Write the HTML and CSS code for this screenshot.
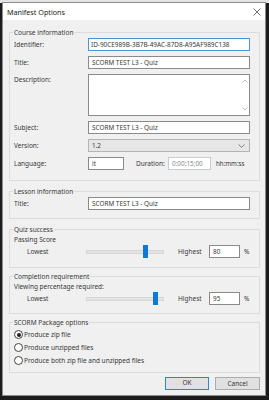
FILE: index.html
```html
<!DOCTYPE html>
<html>
<head>
<meta charset="utf-8">
<link rel="stylesheet" href="styles.css">
</head>
<body>
<div class="screen">
  <div class="window">
    <div class="titlebar">
      <span class="title">Manifest Options</span>
      <svg class="close" width="8" height="8" viewBox="0 0 8 8"><path d="M0.5 0.5 L7.5 7.5 M7.5 0.5 L0.5 7.5" stroke="#333" stroke-width="0.7" fill="none"/></svg>
    </div>
    <div class="body">
      <div class="group g-course">
        <div class="legend">Course information</div>
        <div class="rows">
          <div class="row"><span class="lbl">Identifier:</span><div class="field focus">ID-90CE989B-3B7B-49AC-87D8-A95AF989C138</div></div>
          <div class="row"><span class="lbl">Title:</span><div class="field">SCORM TEST L3 - Quiz</div></div>
          <div class="row row-desc"><span class="lbl">Description:</span>
            <div class="field area">
              <div class="scroll">
                <svg width="6" height="4" viewBox="0 0 6 4"><path d="M0.5 3.5 L3 1 L5.5 3.5" stroke="#b0b0b0" stroke-width="0.8" fill="none"/></svg>
                <svg width="6" height="4" viewBox="0 0 6 4"><path d="M0.5 0.5 L3 3 L5.5 0.5" stroke="#b0b0b0" stroke-width="0.8" fill="none"/></svg>
              </div>
            </div>
          </div>
          <div class="row"><span class="lbl">Subject:</span><div class="field">SCORM TEST L3 - Quiz</div></div>
          <div class="row"><span class="lbl">Version:</span>
            <div class="field select"><span>1.2</span>
              <svg width="7" height="4" viewBox="0 0 7 4"><path d="M0.5 0.5 L3.5 3.3 L6.5 0.5" stroke="#666" stroke-width="0.8" fill="none"/></svg>
            </div>
          </div>
          <div class="row"><span class="lbl">Language:</span><div class="field lang">it</div>
            <span class="dur-lbl">Duration:</span><div class="field dur">0:00:15;00</div><span class="hms">hh:mm:ss</span>
          </div>
        </div>
      </div>

      <div class="group g-lesson">
        <div class="legend">Lesson information</div>
        <div class="rows">
          <div class="row"><span class="lbl">Title:</span><div class="field">SCORM TEST L3 - Quiz</div></div>
        </div>
      </div>

      <div class="group g-quiz">
        <div class="legend">Quiz success</div>
        <div class="sub">Passing Score</div>
        <div class="slider-row">
          <span class="low">Lowest</span>
          <div class="track"><div class="thumb" style="left: 56px"></div></div>
          <span class="high">Highest</span>
          <div class="field pct">80</div>
          <span class="pc">%</span>
        </div>
      </div>

      <div class="group g-comp">
        <div class="legend">Completion requirement</div>
        <div class="sub">Viewing percentage required:</div>
        <div class="slider-row">
          <span class="low">Lowest</span>
          <div class="track"><div class="thumb" style="left: 66px"></div></div>
          <span class="high">Highest</span>
          <div class="field pct">95</div>
          <span class="pc">%</span>
        </div>
      </div>

      <div class="group g-scorm">
        <div class="legend">SCORM Package options</div>
        <div class="radios">
          <div class="radio"><span class="dot on"></span>Produce zip file</div>
          <div class="radio"><span class="dot"></span>Produce unzipped files</div>
          <div class="radio"><span class="dot"></span>Produce both zip file and unzipped files</div>
        </div>
      </div>

      <div class="buttons">
        <div class="btn default">OK</div>
        <div class="btn">Cancel</div>
      </div>
    </div>
  </div>
</div>
</body>
</html>
```

FILE: styles.css
```css
html, body {
  margin: 0;
  padding: 0;
}
body {
  width: 269px;
  height: 400px;
  overflow: hidden;
  background: #1c1c1c;
  font-family: "Noto Sans", "DejaVu Sans", sans-serif;
  font-size: 6.5px;
  color: #383838;
}
.screen {
  width: 269px;
  height: 400px;
  background: linear-gradient(#e4e4e4 0, #e4e4e4 3px, #1c1c1c 3px);
  padding: 2px 0 0 2px;
  box-sizing: border-box;
}
.window {
  width: 264px;
  height: 394px;
  border: 1px solid #8c8c8c;
  box-sizing: border-box;
  background: #f0f0f0;
  display: flex;
  flex-direction: column;
}
.titlebar {
  height: 17px;
  background: #ffffff;
  display: flex;
  align-items: center;
  justify-content: space-between;
  padding: 0 4px 0 4px;
  flex: none;
}
.title {
  font-size: 7.2px;
  color: #222;
}
.body {
  padding: 0 5px 0 6px;
  display: flex;
  flex-direction: column;
}
.group {
  border: 1px solid #dcdcdc;
  display: flex;
  flex-direction: column;
  box-sizing: border-box;
}
.legend {
  margin-top: -5px;
  margin-left: 3px;
  padding: 0 1px;
  height: 9px;
  line-height: 9px;
  background: #f0f0f0;
  align-self: flex-start;
  white-space: nowrap;
}
.g-course { margin-top: 12px; height: 149px; }
.g-lesson { margin-top: 10px; height: 28px; }
.g-quiz { margin-top: 10px; height: 39px; }
.g-comp { margin-top: 8px; height: 38px; }
.g-scorm { margin-top: 8px; height: 51px; }

.rows {
  display: flex;
  flex-direction: column;
  gap: 5px;
  padding: 1px 9px 0 4px;
}
.row {
  display: flex;
  align-items: center;
  height: 13px;
}
.row-desc {
  height: 42px;
  align-items: flex-start;
}
.row-desc .lbl { margin-top: 1px; }
.lbl {
  width: 74px;
  flex: none;
  white-space: nowrap;
}
.field {
  flex: 1;
  height: 13px;
  box-sizing: border-box;
  border: 1px solid #8a8a8a;
  background: #fff;
  padding: 0 3px;
  line-height: 11px;
  white-space: nowrap;
  overflow: hidden;
  font-size: 6.4px;
}
.field.focus { border-color: #4a95d8; padding-left: 2px; }
.field.area {
  height: 42px;
  display: flex;
  justify-content: flex-end;
  padding: 0;
}
.scroll {
  width: 9px;
  display: flex;
  flex-direction: column;
  justify-content: space-between;
  align-items: center;
  padding: 4px 0 4px;
}
.field.select {
  background: #e6e6e6;
  border-color: #b4b4b4;
  display: flex;
  align-items: center;
  justify-content: space-between;
  padding: 0 4px 0 3px;
}
.field.lang {
  flex: none;
  width: 36px;
}
.dur-lbl {
  margin-left: 12px;
  width: 32px;
  flex: none;
}
.field.dur {
  flex: none;
  width: 43px;
  border-color: #cccccc;
  color: #8a8a8a;
  padding-left: 3px;
}
.hms {
  margin-left: 5px;
  flex: none;
  font-size: 6.2px;
}
.sub {
  padding-left: 4px;
  height: 9px;
  line-height: 9px;
  margin-top: 1px;
}
.slider-row {
  display: flex;
  align-items: center;
  height: 13px;
  margin-top: 1px;
}
.low {
  margin-left: 17px;
  width: 59px;
  flex: none;
}
.track {
  width: 76px;
  height: 2px;
  background: #e4e4e4;
  border: 1px solid #d6d6d6;
  position: relative;
  flex: none;
}
.thumb {
  position: absolute;
  top: -6px;
  width: 5px;
  height: 13px;
  background: #1079d6;
}
.high {
  margin-left: 14px;
  width: 31px;
  flex: none;
}
.field.pct {
  flex: none;
  width: 31px;
}
.pc {
  margin-left: 4px;
}
.radios {
  display: flex;
  flex-direction: column;
  padding: 1px 0 0 4px;
}
.radio {
  height: 13px;
  display: flex;
  align-items: center;
  white-space: nowrap;
}
.dot {
  width: 9px;
  height: 9px;
  box-sizing: border-box;
  border: 1px solid #444;
  border-radius: 50%;
  margin-right: 1px;
  background: #fff;
  display: flex;
  align-items: center;
  justify-content: center;
}
.dot.on::after {
  content: "";
  width: 4px;
  height: 4px;
  border-radius: 50%;
  background: #222;
}
.buttons {
  display: flex;
  justify-content: flex-end;
  gap: 6px;
  margin-top: 4px;
}
.btn {
  width: 45px;
  height: 13px;
  box-sizing: border-box;
  border: 1px solid #adadad;
  background: #e1e1e1;
  text-align: center;
  line-height: 11px;
  font-size: 6.5px;
}
.btn.default {
  border: 1.5px solid #2b86d8;
  width: 44px;
  line-height: 10px;
}
```
